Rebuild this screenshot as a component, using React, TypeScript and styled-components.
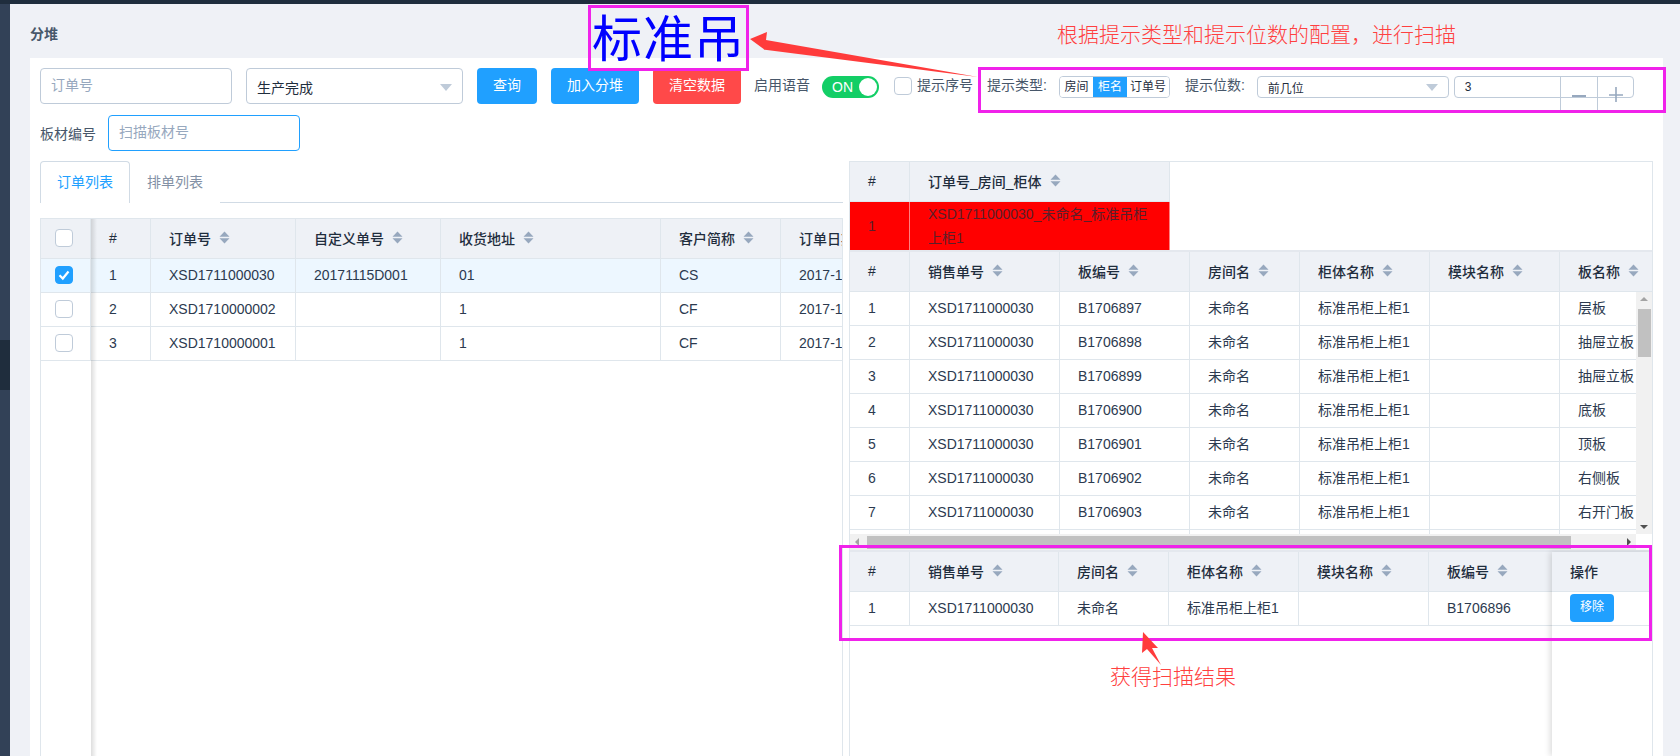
import React from "react";
import styled, { createGlobalStyle } from "styled-components";

const GlobalStyle = createGlobalStyle`
  html, body { margin: 0; padding: 0; height: 756px; overflow: hidden; background: #eff1f6; }
  body { font-family: "Liberation Sans", "Noto Sans CJK SC", sans-serif; font-size: 14px; color: #48576a; }
  * { box-sizing: border-box; }
`;

const Page = styled.div`
  position: relative;
  width: 1680px;
  height: 756px;
  overflow: hidden;
  display: flex;
  flex-direction: column;
`;
const TopBar = styled.div`height: 4px; background: #1f2d3d; flex: none;`;
const Body = styled.div`display: flex; flex: 1; min-height: 0;`;
const Sidebar = styled.div`
  width: 10px;
  flex: none;
  background: #324157;
  padding-top: 336px;
`;
const SidebarActive = styled.div`height: 50px; background: #1f2d3d;`;
const Main = styled.div`
  flex: 1;
  min-width: 0;
  padding: 0 17px 0 20px;
  display: flex;
  flex-direction: column;
`;
const PageTitle = styled.div`
  height: 54px;
  padding-top: 20px;
  line-height: 20px;
  font-weight: 700;
  font-size: 14px;
  color: #48576a;
  flex: none;
`;
const Card = styled.div`
  flex: 1;
  min-height: 0;
  background: #fff;
  padding: 10px 10px 0;
  display: flex;
  flex-direction: column;
`;
const FilterRow = styled.div`display: flex; height: 36px; flex: none; align-items: flex-start;`;
const TextBox = styled.div<{ $w: number; $focus?: boolean }>`
  width: ${(p) => p.$w}px;
  height: 36px;
  flex: none;
  border: 1px solid ${(p) => (p.$focus ? "#20a0ff" : "#bfcbd9")};
  border-radius: 4px;
  padding: 0 10px;
  line-height: 33px;
  color: #97a8be;
  background: #fff;
`;
const SelectBox = styled.div<{ $w: number; $ml: number; $small?: boolean }>`
  width: ${(p) => p.$w}px;
  height: ${(p) => (p.$small ? 22 : 36)}px;
  flex: none;
  border: 1px solid #bfcbd9;
  border-radius: 4px;
  padding: ${(p) => (p.$small ? 0 : 2)}px 10px 0;
  margin-top: ${(p) => (p.$small ? 8 : 0)}px;
  margin-left: ${(p) => p.$ml}px;
  display: flex;
  align-items: center;
  justify-content: space-between;
  color: #1f2d3d;
  font-size: ${(p) => (p.$small ? 12 : 14)}px;
`;
const Caret = styled.span`
  width: 0;
  height: 0;
  border-left: 6px solid transparent;
  border-right: 6px solid transparent;
  border-top: 7px solid #bfcbd9;
`;
const ActionButton = styled.div<{ $w: number; $danger?: boolean }>`
  width: ${(p) => p.$w}px;
  height: 36px;
  flex: none;
  margin-left: 14px;
  border-radius: 4px;
  background: ${(p) => (p.$danger ? "#ff4949" : "#20a0ff")};
  color: #fff;
  text-align: center;
  line-height: 34px;
`;
const InlineLabel = styled.div<{ $ml: number }>`
  margin-left: ${(p) => p.$ml}px;
  flex: none;
  line-height: 20px;
  padding-top: 7px;
  color: #48576a;
  white-space: nowrap;
`;
const Switch = styled.div`
  width: 57px;
  height: 22px;
  margin: 8px 0 0 12px;
  flex: none;
  border-radius: 11px;
  background: #13ce66;
  color: #fff;
  position: relative;
  padding-left: 10px;
  line-height: 22px;
`;
const SwitchKnob = styled.span`
  position: absolute;
  right: 2px;
  top: 2px;
  width: 18px;
  height: 18px;
  border-radius: 50%;
  background: #fff;
`;
const Checkbox = styled.span<{ $checked?: boolean }>`
  display: block;
  width: 18px;
  height: 18px;
  border-radius: 4px;
  border: 1px solid ${(p) => (p.$checked ? "#20a0ff" : "#bfcbd9")};
  background: ${(p) => (p.$checked ? "#20a0ff" : "#fff")};
  flex: none;
`;
const FilterCheck = styled.div`margin: 9px 5px 0 15px; flex: none;`;
const Segmented = styled.div`
  margin: 8px 0 0 12px;
  height: 22px;
  display: flex;
  flex: none;
  border: 1px solid #bfcbd9;
  border-radius: 4px;
  overflow: hidden;
  font-size: 12px;
  color: #1f2d3d;
  line-height: 20px;
`;
const SegmentItem = styled.div<{ $active?: boolean; $w: number }>`
  width: ${(p) => p.$w}px;
  text-align: center;
  background: ${(p) => (p.$active ? "#20a0ff" : "#fff")};
  color: ${(p) => (p.$active ? "#fff" : "#1f2d3d")};
`;
const NumberBox = styled.div`
  position: relative;
  width: 180px;
  height: 22px;
  margin: 8px 0 0 5px;
  flex: none;
  border: 1px solid #bfcbd9;
  border-radius: 4px;
  padding-left: 10px;
  font-size: 12px;
  line-height: 20px;
  color: #1f2d3d;
`;
const Stepper = styled.div<{ $right: number }>`
  position: absolute;
  top: -1px;
  right: ${(p) => p.$right}px;
  width: 37px;
  height: 34px;
  border-left: 1px solid #bfcbd9;
  display: flex;
  align-items: center;
  justify-content: center;
  color: #97a8be;
`;
const ScanRow = styled.div`display: flex; margin-top: 11px; height: 36px; flex: none; align-items: center;`;
const ScanLabel = styled.div`width: 68px; flex: none; color: #48576a;`;

const Columns = styled.div`
  flex: 1;
  min-height: 0;
  margin-top: 10px;
  display: grid;
  grid-template-columns: 803px 804px;
  gap: 6px;
`;
const LeftColumn = styled.div`display: flex; flex-direction: column; min-height: 0;`;
const Tabs = styled.div`
  height: 42px;
  flex: none;
  display: flex;
  border-bottom: 1px solid #d1dbe5;
  margin-bottom: 15px;
`;
const Tab = styled.div<{ $active?: boolean }>`
  height: 42px;
  padding: 0 16px;
  line-height: 41px;
  color: ${(p) => (p.$active ? "#20a0ff" : "#8391a5")};
  background: #fff;
  border: 1px solid ${(p) => (p.$active ? "#d1dbe5" : "transparent")};
  border-bottom: none;
  border-radius: 4px 4px 0 0;
`;
const Frame = styled.div`
  position: relative;
  flex: 1;
  min-height: 0;
  border: 1px solid #dfe6ec;
  border-bottom: none;
  overflow: hidden;
  background: #fff;
`;
const LeftFixedEdge = styled.div`
  position: absolute;
  left: 50px;
  top: 0;
  bottom: 0;
  width: 6px;
  background: linear-gradient(to right, rgba(0, 0, 0, 0.13), rgba(0, 0, 0, 0));
`;
const Table = styled.table<{ $w: number }>`
  table-layout: fixed;
  border-collapse: separate;
  border-spacing: 0;
  width: ${(p) => p.$w}px;
`;
const Th = styled.th<{ $h: number }>`
  height: ${(p) => p.$h}px;
  padding: 0 0 2px 18px;
  background: #eef1f6;
  border-right: 1px solid #dfe6ec;
  border-bottom: 1px solid #dfe6ec;
  color: #1f2d3d;
  font-weight: 500;
  text-align: left;
  white-space: nowrap;
  overflow: hidden;
`;
const Td = styled.td<{ $h: number; $tone?: "selected" | "alert" }>`
  height: ${(p) => p.$h}px;
  padding: 0 ${(p) => (p.$tone === "alert" ? 15 : 0)}px ${(p) => (p.$tone === "alert" ? 0 : 2)}px 18px;
  background: ${(p) => (p.$tone === "selected" ? "#edf7ff" : p.$tone === "alert" ? "#ff0000" : "#fff")};
  border-right: 1px solid ${(p) => (p.$tone === "alert" ? "#ff8080" : "#dfe6ec")};
  border-bottom: ${(p) => (p.$tone === "alert" ? "none" : "1px solid #dfe6ec")};
  color: ${(p) => (p.$tone === "alert" ? "#5a1f2a" : "#2c3a4f")};
  line-height: 24px;
  white-space: ${(p) => (p.$tone === "alert" ? "normal" : "nowrap")};
  word-break: break-all;
  overflow: hidden;
`;
const CheckCell = styled.div`margin-left: -4px;`;
const HeadLabel = styled.span`display: inline-flex; align-items: center; gap: 8px;`;

const RightColumn = styled.div`
  position: relative;
  min-height: 0;
  border: 1px solid #dfe6ec;
  border-bottom: none;
  overflow: hidden;
  background: #fff;
  display: flex;
  flex-direction: column;
`;
const TopTableBlock = styled.div`flex: none; border-bottom: 2px solid #e4e8ee;`;
const Scroller = styled.div`position: relative; height: 298px; overflow: hidden; flex: none;`;
const VTrack = styled.div`
  position: absolute;
  right: 0;
  top: 40px;
  width: 16px;
  height: 242px;
  background: #f1f1f1;
`;
const VThumb = styled.div`
  position: absolute;
  left: 2px;
  right: 1px;
  top: 17px;
  height: 48px;
  background: #c1c1c1;
`;
const HTrack = styled.div`
  position: absolute;
  left: 0;
  bottom: 0;
  width: 786px;
  height: 16px;
  background: #f1f1f1;
`;
const HThumb = styled.div`
  position: absolute;
  left: 17px;
  width: 704px;
  top: 2px;
  height: 13px;
  background: #c1c1c1;
`;
const ScrollArrow = styled.span<{ $dir: "up" | "down" | "left" | "right"; $dark?: boolean }>`
  position: absolute;
  width: 0;
  height: 0;
  ${(p) => {
    const c = p.$dark ? "#505050" : "#a3a3a3";
    switch (p.$dir) {
      case "up":
        return `top:5px;left:4px;border-left:4px solid transparent;border-right:4px solid transparent;border-bottom:4px solid ${c};`;
      case "down":
        return `bottom:5px;left:4px;border-left:4px solid transparent;border-right:4px solid transparent;border-top:4px solid ${c};`;
      case "left":
        return `left:5px;top:4px;border-top:4px solid transparent;border-bottom:4px solid transparent;border-right:4px solid ${c};`;
      default:
        return `right:5px;top:4px;border-top:4px solid transparent;border-bottom:4px solid transparent;border-left:4px solid ${c};`;
    }
  }}
`;
const ResultBlock = styled.div`
  position: relative;
  flex: 1;
  min-height: 0;
  border-top: 2px solid #e4e8ee;
`;
const RightFixed = styled.div`
  position: absolute;
  right: 0;
  top: 0;
  bottom: 0;
  width: 100px;
  background: #fff;
  box-shadow: -2px 0 6px rgba(0, 0, 0, 0.14);
`;
const SmallButton = styled.div`
  width: 44px;
  height: 28px;
  border-radius: 4px;
  background: #20a0ff;
  color: #fff;
  font-size: 12px;
  text-align: center;
  line-height: 27px;
`;

/* screenshot annotations laid over the page */
const TitleBox = styled.div`
  position: absolute;
  left: 588px;
  top: 5px;
  width: 161px;
  height: 66px;
  border: 3px solid #f022ea;
  color: #0000ff;
  font-size: 50px;
  font-weight: 400;
  letter-spacing: 1px;
  line-height: 64px;
  text-align: center;
  white-space: nowrap;
`;
const ConfigBox = styled.div`
  position: absolute;
  left: 978px;
  top: 67px;
  width: 688px;
  height: 46px;
  border: 3px solid #f022ea;
`;
const ResultBox = styled.div`
  position: absolute;
  left: 839px;
  top: 545px;
  width: 813px;
  height: 96px;
  border: 3px solid #f022ea;
`;
const NoteText = styled.div<{ $x: number; $y: number }>`
  position: absolute;
  left: ${(p) => p.$x}px;
  top: ${(p) => p.$y}px;
  font-size: 21px;
  font-weight: 300;
  line-height: 28px;
  color: #ff4040;
  white-space: nowrap;
`;
const ArrowLayer = styled.svg`
  position: absolute;
  left: 0;
  top: 0;
  width: 1680px;
  height: 756px;
  pointer-events: none;
`;

const SortIcon = () => (
  <svg width="11" height="13" viewBox="0 0 11 13">
    <path d="M5.5 0.5 L10.5 5.8 H0.5Z" fill="#97a8be" />
    <path d="M5.5 12.5 L10.5 7.2 H0.5Z" fill="#97a8be" />
  </svg>
);
const CheckMark = () => (
  <svg width="16" height="16" viewBox="0 0 16 16" style={{ display: "block" }}>
    <path d="M3.5 8.2 L6.8 11.5 L12.5 4.5" fill="none" stroke="#fff" strokeWidth="2.2" />
  </svg>
);
const Head = ({ text }: { text: string }) => (
  <HeadLabel>
    {text}
    <SortIcon />
  </HeadLabel>
);
const Colgroup = ({ cols }: { cols: number[] }) => (
  <colgroup>
    {cols.map((w, i) => (
      <col key={i} width={w} />
    ))}
  </colgroup>
);
const sum = (a: number[]) => a.reduce((x, y) => x + y, 0);

const orderCols = [50, 60, 145, 145, 220, 120, 140];
const orders = [
  ["1", "XSD1711000030", "20171115D001", "01", "CS", "2017-11-15"],
  ["2", "XSD1710000002", "", "1", "CF", "2017-10-20"],
  ["3", "XSD1710000001", "", "1", "CF", "2017-10-20"],
];
const boardCols = [60, 150, 130, 110, 130, 130, 100];
const boardHeads = ["销售单号", "板编号", "房间名", "柜体名称", "模块名称", "板名称"];
const boards = [
  ["1", "B1706897", "层板"],
  ["2", "B1706898", "抽屉立板"],
  ["3", "B1706899", "抽屉立板"],
  ["4", "B1706900", "底板"],
  ["5", "B1706901", "顶板"],
  ["6", "B1706902", "右侧板"],
  ["7", "B1706903", "右开门板"],
  ["8", "B1706904", "左侧板"],
];
const resultCols = [60, 149, 110, 130, 130, 130];
const resultHeads = ["销售单号", "房间名", "柜体名称", "模块名称", "板编号"];

export default function App() {
  return (
    <Page>
      <GlobalStyle />
      <TopBar />
      <Body>
        <Sidebar>
          <SidebarActive />
        </Sidebar>
        <Main>
          <PageTitle>分堆</PageTitle>
          <Card>
            <FilterRow>
              <TextBox $w={192}>订单号</TextBox>
              <SelectBox $w={217} $ml={14}>
                生产完成
                <Caret />
              </SelectBox>
              <ActionButton $w={60}>查询</ActionButton>
              <ActionButton $w={88}>加入分堆</ActionButton>
              <ActionButton $w={88} $danger>
                清空数据
              </ActionButton>
              <InlineLabel $ml={13}>启用语音</InlineLabel>
              <Switch>
                ON
                <SwitchKnob />
              </Switch>
              <FilterCheck>
                <Checkbox />
              </FilterCheck>
              <InlineLabel $ml={0}>提示序号</InlineLabel>
              <InlineLabel $ml={14}>提示类型:</InlineLabel>
              <Segmented>
                <SegmentItem $w={33}>房间</SegmentItem>
                <SegmentItem $w={34} $active>
                  柜名
                </SegmentItem>
                <SegmentItem $w={42}>订单号</SegmentItem>
              </Segmented>
              <InlineLabel $ml={15}>提示位数:</InlineLabel>
              <SelectBox $w={192} $ml={12} $small>
                前几位
                <Caret />
              </SelectBox>
              <NumberBox>
                3
                <Stepper $right={36}>
                  <svg width="16" height="16" viewBox="0 0 16 16">
                    <path d="M1 11h14" stroke="#97a8be" strokeWidth="2" />
                  </svg>
                </Stepper>
                <Stepper $right={-1}>
                  <svg width="16" height="18" viewBox="0 0 16 18">
                    <path d="M1 11h14M8 3v16" stroke="#97a8be" strokeWidth="1.6" />
                  </svg>
                </Stepper>
              </NumberBox>
            </FilterRow>
            <ScanRow>
              <ScanLabel>板材编号</ScanLabel>
              <TextBox $w={192} $focus>
                扫描板材号
              </TextBox>
            </ScanRow>
            <Columns>
              <LeftColumn>
                <Tabs>
                  <Tab $active>订单列表</Tab>
                  <Tab>排单列表</Tab>
                </Tabs>
                <Frame>
                  <Table $w={sum(orderCols)}>
                    <Colgroup cols={orderCols} />
                    <thead>
                      <tr>
                        <Th $h={40}>
                          <CheckCell>
                            <Checkbox />
                          </CheckCell>
                        </Th>
                        <Th $h={40}>#</Th>
                        {["订单号", "自定义单号", "收货地址", "客户简称", "订单日期"].map((h) => (
                          <Th $h={40} key={h}>
                            <Head text={h} />
                          </Th>
                        ))}
                      </tr>
                    </thead>
                    <tbody>
                      {orders.map((r, i) => (
                        <tr key={r[0]}>
                          <Td $h={34} $tone={i === 0 ? "selected" : undefined}>
                            <CheckCell>
                              <Checkbox $checked={i === 0}>{i === 0 && <CheckMark />}</Checkbox>
                            </CheckCell>
                          </Td>
                          {r.map((c, j) => (
                            <Td $h={34} key={j} $tone={i === 0 ? "selected" : undefined}>
                              {c}
                            </Td>
                          ))}
                        </tr>
                      ))}
                    </tbody>
                  </Table>
                  <LeftFixedEdge />
                </Frame>
              </LeftColumn>
              <RightColumn>
                <TopTableBlock>
                  <Table $w={320}>
                    <Colgroup cols={[60, 260]} />
                    <thead>
                      <tr>
                        <Th $h={40}>#</Th>
                        <Th $h={40}>
                          <Head text="订单号_房间_柜体" />
                        </Th>
                      </tr>
                    </thead>
                    <tbody>
                      <tr>
                        <Td $h={48} $tone="alert">
                          1
                        </Td>
                        <Td $h={48} $tone="alert">
                          XSD1711000030_未命名_标准吊柜上柜1
                        </Td>
                      </tr>
                    </tbody>
                  </Table>
                </TopTableBlock>
                <Scroller>
                  <Table $w={sum(boardCols)}>
                    <Colgroup cols={boardCols} />
                    <thead>
                      <tr>
                        <Th $h={40}>#</Th>
                        {boardHeads.map((h) => (
                          <Th $h={40} key={h}>
                            <Head text={h} />
                          </Th>
                        ))}
                      </tr>
                    </thead>
                    <tbody>
                      {boards.map((r) => (
                        <tr key={r[0]}>
                          <Td $h={34}>{r[0]}</Td>
                          <Td $h={34}>XSD1711000030</Td>
                          <Td $h={34}>{r[1]}</Td>
                          <Td $h={34}>未命名</Td>
                          <Td $h={34}>标准吊柜上柜1</Td>
                          <Td $h={34} />
                          <Td $h={34}>{r[2]}</Td>
                        </tr>
                      ))}
                    </tbody>
                  </Table>
                  <VTrack>
                    <ScrollArrow $dir="up" />
                    <VThumb />
                    <ScrollArrow $dir="down" $dark />
                  </VTrack>
                  <HTrack>
                    <ScrollArrow $dir="left" />
                    <HThumb />
                    <ScrollArrow $dir="right" $dark />
                  </HTrack>
                </Scroller>
                <ResultBlock>
                  <Table $w={sum(resultCols)}>
                    <Colgroup cols={resultCols} />
                    <thead>
                      <tr>
                        <Th $h={40}>#</Th>
                        {resultHeads.map((h) => (
                          <Th $h={40} key={h}>
                            <Head text={h} />
                          </Th>
                        ))}
                      </tr>
                    </thead>
                    <tbody>
                      <tr>
                        <Td $h={34}>1</Td>
                        <Td $h={34}>XSD1711000030</Td>
                        <Td $h={34}>未命名</Td>
                        <Td $h={34}>标准吊柜上柜1</Td>
                        <Td $h={34} />
                        <Td $h={34}>B1706896</Td>
                      </tr>
                    </tbody>
                  </Table>
                  <RightFixed>
                    <Table $w={100}>
                      <thead>
                        <tr>
                          <Th $h={40}>操作</Th>
                        </tr>
                      </thead>
                      <tbody>
                        <tr>
                          <Td $h={34}>
                            <SmallButton>移除</SmallButton>
                          </Td>
                        </tr>
                      </tbody>
                    </Table>
                  </RightFixed>
                </ResultBlock>
              </RightColumn>
            </Columns>
          </Card>
        </Main>
      </Body>
      <TitleBox>标准吊</TitleBox>
      <ConfigBox />
      <ResultBox />
      <NoteText $x={1057} $y={21}>
        根据提示类型和提示位数的配置，进行扫描
      </NoteText>
      <NoteText $x={1110} $y={663}>
        获得扫描结果
      </NoteText>
      <ArrowLayer viewBox="0 0 1680 756">
        <polygon points="750,39 767,32 766,40 978,77 763,49.5 765,50" fill="#ff3b3b" />
        <polygon points="1143,632 1158,648 1152,648 1161,665 1147,649 1142,653" fill="#ff3b3b" />
      </ArrowLayer>
    </Page>
  );
}
